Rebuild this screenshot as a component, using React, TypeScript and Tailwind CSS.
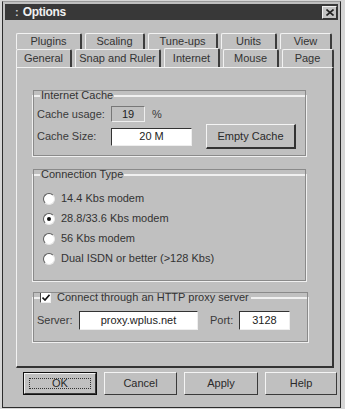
import React from "react";

const font = { fontFamily: '"Liberation Sans", Arial, sans-serif' };

function Tab({ label, w, selected }: { label: string; w: string; selected?: boolean }) {
  return (
    <div
      className={`${w} flex items-center justify-center border-l border-t border-l-[#f2f2f2] border-t-[#f2f2f2] border-r-2 border-r-[#3c3c3c] rounded-t-[2px] text-[11px] text-[#333] ${
        selected ? "h-[19px] -mt-[1px]" : "h-full"
      }`}
    >
      {label}
    </div>
  );
}

function Radio({ label, checked }: { label: string; checked?: boolean }) {
  return (
    <div className="flex items-center h-[13px]">
      <div className="ml-[6px] w-[12px] h-[12px] rounded-full bg-white border border-[#5a5a5a] border-r-[#e8e8e8] border-b-[#e8e8e8] flex items-center justify-center">
        {checked && <div className="w-[4px] h-[4px] rounded-full bg-[#111]" />}
      </div>
      <span className="ml-[6px] text-[11px] text-[#333]">{label}</span>
    </div>
  );
}

function Button({ label, def }: { label: string; def?: boolean }) {
  return (
    <div
      className={`h-[23px] flex items-center justify-center text-[11px] text-[#2a2a2a] ${
        def ? "border border-[#111]" : ""
      }`}
    >
      <div className="w-full h-full flex items-center justify-center border border-t-[#f4f4f4] border-l-[#f4f4f4] border-r-[#3a3a3a] border-b-[#3a3a3a]">
        <div
          className={`flex items-center justify-center ${
            def ? "w-[calc(100%-8px)] h-[calc(100%-8px)] border border-dotted border-[#333]" : ""
          }`}
        >
          {label}
        </div>
      </div>
    </div>
  );
}

export default function App() {
  return (
    <div className="w-[345px] h-[409px] bg-[#d6d6d6] pl-[2px] pt-[1px] overflow-hidden" style={font}>
      <div className="w-[339px] h-[407px] bg-[#c0c0c0] border border-[#2c2c2c] border-t-[#9a9a9a] p-[2px] flex flex-col">
        {/* title bar */}
        <div className="h-[16px] bg-[#383838] flex items-center pl-[10px] pr-[1px]">
          <span className="text-[#cfcfcf] text-[11px] font-bold">:</span>
          <span className="ml-[4px] text-[#f0f0f0] text-[12px] font-bold tracking-tight">Options</span>
          <div className="ml-auto w-[15px] h-[13px] bg-[#c4c4c4] border border-t-[#efefef] border-l-[#efefef] border-r-[#333] border-b-[#333] flex items-center justify-center">
            <svg width="8" height="7" viewBox="0 0 8 7">
              <path d="M0.5 0.5 L7.5 6.5 M7.5 0.5 L0.5 6.5" stroke="#222" strokeWidth="1.6" />
            </svg>
          </div>
        </div>

        {/* tabs */}
        <div className="mt-[13px] ml-[11px] w-[318px]">
          <div className="h-[16px] flex gap-[3px]">
            <Tab label="Plugins" w="w-[66px]" />
            <Tab label="Scaling" w="w-[60px]" />
            <Tab label="Tune-ups" w="w-[70px]" />
            <Tab label="Units" w="w-[56px]" />
            <Tab label="View" w="w-[52px]" />
          </div>
          <div className="h-[18px] flex gap-[3px]">
            <Tab label="General" w="w-[56px]" />
            <Tab label="Snap and Ruler" w="w-[86px]" />
            <Tab label="Internet" w="w-[56px]" selected />
            <Tab label="Mouse" w="w-[56px]" />
            <Tab label="Page" w="w-[52px]" />
          </div>

          {/* tab panel */}
          <div className="h-[301px] border border-t-[#f2f2f2] border-l-[#f2f2f2] border-r-2 border-b-2 border-r-[#333] border-b-[#333] pl-[15px] pt-[21px]">
            <fieldset className="w-[275px] h-[68px] border-2 border-[#f0f0f0] outline outline-1 -outline-offset-2 outline-[#8a8a8a] px-[3px]">
              <legend className="text-[11px] text-[#333] ml-[3px] px-[1px] leading-[13px]">Internet Cache</legend>
              <div className="flex items-center h-[16px] mt-[4px]">
                <span className="w-[74px] text-[11px] text-[#3a3a3a]">Cache usage:</span>
                <div className="w-[34px] h-[16px] border border-[#777] border-r-[#eee] border-b-[#eee] flex items-center justify-center text-[11px] text-[#222]">
                  19
                </div>
                <span className="ml-[7px] text-[11px] text-[#3a3a3a]">%</span>
              </div>
              <div className="flex items-center h-[25px] mt-[2px]">
                <span className="w-[74px] text-[11px] text-[#3a3a3a]">Cache Size:</span>
                <div className="w-[81px] h-[18px] bg-white border border-[#333] border-r-[#eee] border-b-[#eee] flex items-center justify-center text-[11px] text-[#222]">
                  20 M
                </div>
                <div className="ml-[14px] w-[90px] h-[25px] border border-t-[#f4f4f4] border-l-[#f4f4f4] border-r-2 border-b-2 border-r-[#333] border-b-[#333] flex items-center justify-center text-[11px] text-[#2a2a2a]">
                  Empty Cache
                </div>
              </div>
            </fieldset>

            <fieldset className="mt-[11px] w-[275px] h-[114px] border-2 border-[#f0f0f0] outline outline-1 -outline-offset-2 outline-[#8a8a8a] px-[3px]">
              <legend className="text-[11px] text-[#333] ml-[3px] px-[1px] leading-[13px]">Connection Type</legend>
              <div className="flex flex-col gap-[7px] mt-[11px]">
                <Radio label="14.4 Kbs modem" />
                <Radio label="28.8/33.6 Kbs modem" checked />
                <Radio label="56 Kbs modem" />
                <Radio label="Dual ISDN or better (>128 Kbs)" />
              </div>
            </fieldset>

            <fieldset className="mt-[9px] w-[277px] h-[52px] border-2 border-[#f0f0f0] outline outline-1 -outline-offset-2 outline-[#8a8a8a] px-[3px]">
              <legend className="flex items-center ml-[3px] pr-[2px] leading-[13px]">
                <div className="w-[11px] h-[11px] bg-white border border-[#444] border-r-[#eee] border-b-[#eee] flex items-center justify-center">
                  <svg width="8" height="7" viewBox="0 0 8 7">
                    <path d="M0.5 3.5 L3 6 L7.5 0.8" stroke="#111" strokeWidth="1.6" fill="none" />
                  </svg>
                </div>
                <span className="ml-[6px] text-[11px] text-[#333]">Connect through an HTTP proxy server</span>
              </legend>
              <div className="flex items-center h-[19px] mt-[7px]">
                <span className="w-[42px] text-[11px] text-[#3a3a3a]">Server:</span>
                <div className="w-[119px] h-[19px] bg-white border border-[#333] border-r-[#eee] border-b-[#eee] flex items-center justify-center text-[11px] text-[#222]">
                  proxy.wplus.net
                </div>
                <span className="ml-[12px] w-[29px] text-[11px] text-[#3a3a3a]">Port:</span>
                <div className="w-[51px] h-[19px] bg-white border border-[#333] border-r-[#eee] border-b-[#eee] flex items-center justify-center text-[11px] text-[#222]">
                  3128
                </div>
              </div>
            </fieldset>
          </div>
        </div>

        {/* buttons */}
        <div className="mt-[4px] ml-[18px] grid grid-cols-[74px_73px_74px_72px] gap-x-[7px]">
          <Button label="OK" def />
          <Button label="Cancel" />
          <Button label="Apply" />
          <Button label="Help" />
        </div>
      </div>
    </div>
  );
}
